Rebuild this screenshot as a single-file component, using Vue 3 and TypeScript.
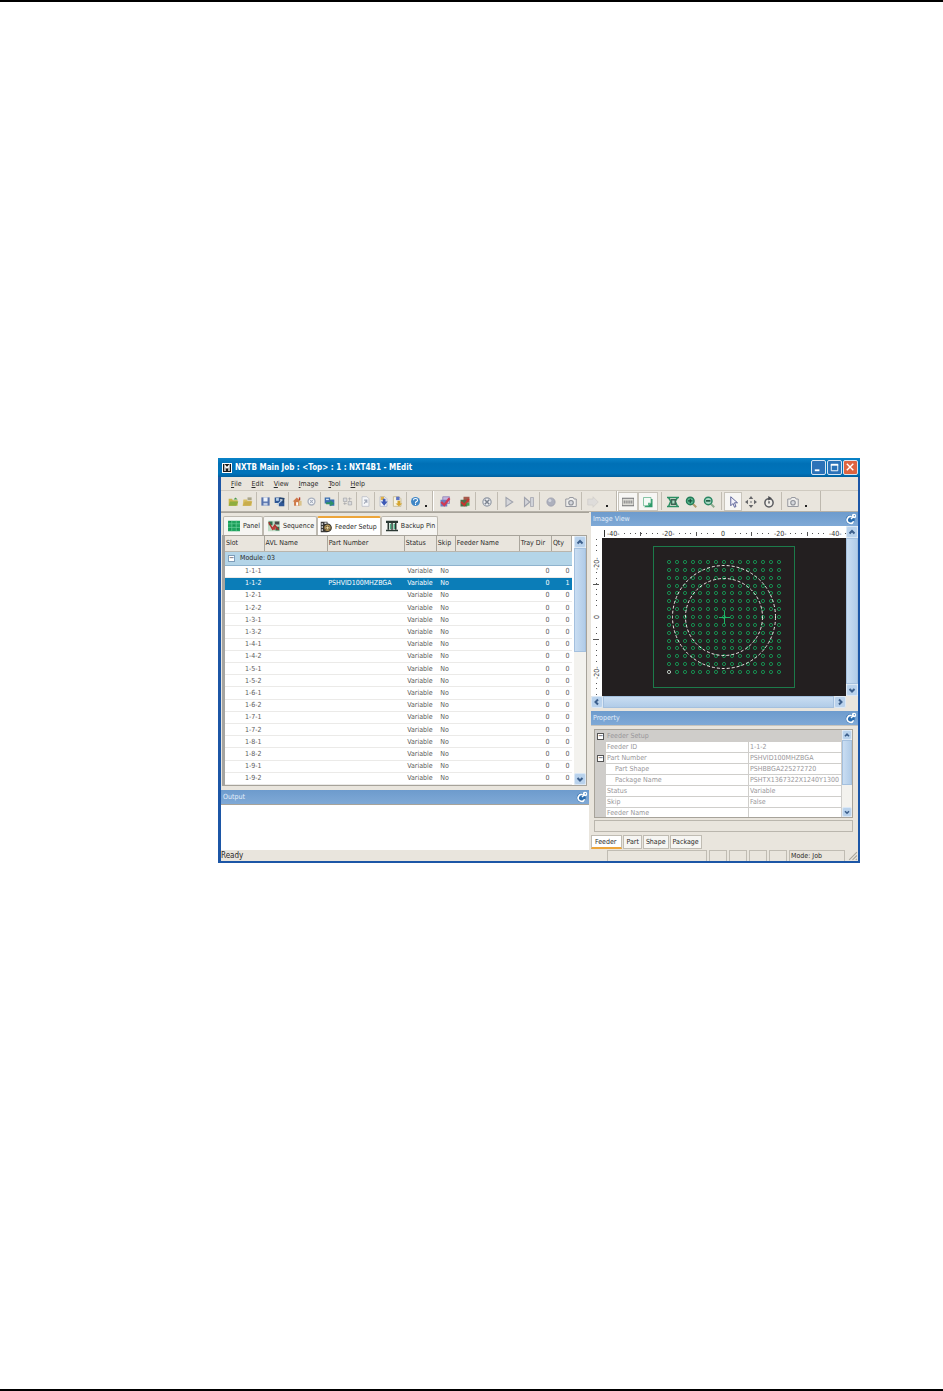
<script setup lang="ts">
interface Tool { icon: string; label: string; size?: 'mid' | 'wide'; on?: boolean; more?: boolean }
interface Bar { kind: string; groups: Tool[][] }

const icons: Record<string, string> = {
  folder: '<path d="M1 4h5l1 2h7v8H1z" fill="#c9b64a"/><path d="M3 8h12l-3 6H1z" fill="#8fae3f"/><path d="M8 5l3-3 3 3z" fill="#4b9a48"/>',
  folderNew: '<path d="M2 5h5l1 2h6v7H1z" fill="#d9bf62"/><path d="M4 8h11l-3 6H1z" fill="#c9ad4d"/><path d="M8 2h6v4H8z" fill="#a9a58a"/>',
  save: '<path d="M2 2h12v12H2z" fill="#5773ad"/><path d="M5 2h6v6H5z" fill="#eef3fa"/><path d="M5 10h6v4H5z" fill="#c3cfe4"/>',
  saveAll: '<path d="M1 2h8v8H1zM7 7h8v8H7z" fill="#2f5795"/><path d="M3 3h4v4H3z" fill="#b7d0ea"/><path d="M4 13l9-8" stroke="#b7d0ea" stroke-width="1.500"/><path d="M8 3l6 1-1 6" fill="none" stroke="#27466f" stroke-width="2.500"/>',
  home: '<path d="M1 8l6-6 6 6h-2v6H3V8z" fill="#cf7b4a"/><path d="M6 9h3v5H6z" fill="#fff"/><path d="M10 7h4v7h-4z" fill="#d9c28a"/><path d="M10 2h2v4h-2z" fill="#b63c2e"/>',
  gear: '<circle cx="8" cy="8" r="5" fill="#f4f5f8" stroke="#a9b0bd" stroke-width="2"/><path d="M6 6l4 4M10 6l-4 4" stroke="#a3acbc" stroke-width="1.500" fill="none"/>',
  transfer: '<path d="M1 2h8v9H1zM8 5h7v9H8z" fill="#3b6fb0"/><path d="M3 9h6V6l6 5-6 4v-3H3z" fill="#2e9168"/><path d="M3 4h4v2H3z" fill="#cde2f5"/>',
  link: '<path d="M2 3h5v5H2zM9 8h5v5H9z" fill="#d9dadd" stroke="#a3a5a8"/><path d="M9 4h5M2 11h5M11 2v5M4 9v4" stroke="#a3a5a8"/>',
  sheet: '<path d="M3 1h7l3 3v11H3z" fill="#f5f6f8" stroke="#b3b8c3"/><path d="M6 11l4-5M6 6h4v4" stroke="#a0a8b8" stroke-width="1.500" fill="none"/>',
  pageIn: '<path d="M3 1h7l3 3v11H3z" fill="#f3f5fa" stroke="#a5aec8"/><path d="M4 1h5v5H4z" fill="#e1b24a"/><path d="M4 8h3V4h4v4h3l-5 6z" fill="#3d59b5"/>',
  pageOut: '<path d="M2 1h8l3 3v11H2z" fill="#f7f3e2" stroke="#b9ab7c"/><path d="M6 1h5v5H6z" fill="#5c73c4"/><path d="M8 7h4v4h3l-5 4-5-4h3z" fill="#d5a52e"/>',
  help: '<circle cx="8" cy="8" r="6.500" fill="#3f86c6"/><path d="M5 6c0-3 6-3 6 0 0 2-3 2-3 4M8 11v2" stroke="#fff" stroke-width="1.500" fill="none"/>',
  jobCheck: '<path d="M5 1h9v9H5z" fill="#c4b6dc" stroke="#8a7cb5"/><path d="M2 5h9v9H2z" fill="#6c7fc0"/><path d="M3 8l4 4 7-9" stroke="#cf3b55" stroke-width="3" fill="none"/>',
  jobRun: '<path d="M6 1h8v8H6z" fill="#a55b4c"/><path d="M2 5h9v9H2z" fill="#4d6f4a"/><path d="M3 8l4 4 6-8" stroke="#c8342f" stroke-width="2.500" fill="none"/><path d="M10 9h4v4h-4z" fill="#49a254"/>',
  cancel: '<circle cx="8" cy="8" r="5.500" fill="#edeef1" stroke="#8d95a1" stroke-width="1.500"/><path d="M5 5l6 6M11 5l-6 6" stroke="#7c8490" stroke-width="2"/>',
  play: '<path d="M4 2l9 6-9 6z" fill="#d5d6da" stroke="#a0a3ad" stroke-width="1.500"/>',
  step: '<path d="M2 2l7 6-7 6z" fill="#d5d6da" stroke="#a0a3ad" stroke-width="1.500"/><path d="M10 2h4v12h-4z" fill="#d0d2d8" stroke="#a0a3ad"/>',
  record: '<circle cx="8" cy="8" r="5.500" fill="#adb0bd" stroke="#999cab"/><circle cx="6.500" cy="6" r="2" fill="#d5d7df"/>',
  camera: '<path d="M1 4h4l1-2h5l1 2h3v10H1z" fill="#eeedeb" stroke="#8e9199" stroke-width="1.200"/><circle cx="8" cy="9" r="3" fill="#d6d8dd" stroke="#8e9199" stroke-width="1.500"/>',
  forward: '<path d="M1 4h7V1l7 7-7 7v-3H1z" fill="#dedcda" stroke="#d0cdca"/>',
  ruler: '<path d="M0 3h16v10H0z" fill="#dddcd7" stroke="#6d6d70" stroke-width="1.300"/><path d="M3 6v4M5.500 6v4M8 6v4M10.500 6v4M13 6v4" stroke="#5d5d60"/>',
  layers: '<path d="M3 15h11V4h-2z" fill="#2e9a6a"/><path d="M2 2h10v7l-4 4H2z" fill="#f4faf6" stroke="#62b48b"/><path d="M12 9H8v4z" fill="#62b48b"/>',
  fit: '<path d="M0 2h16M0 14h16M2 2l3 5-3 7M14 2l-3 5 3 7" stroke="#2b8f63" stroke-width="2" fill="none"/><path d="M5 4h7v8H5z" fill="#3f6354"/><path d="M7 6h3v4H7z" fill="#a8dcc3"/>',
  zoomIn: '<path d="M10 10l5 5" stroke="#b39b6c" stroke-width="2.500"/><circle cx="7" cy="6.500" r="5" fill="#5fb892" stroke="#237d58" stroke-width="2"/><path d="M4 6.500h6M7 3.500v6" stroke="#134f38" stroke-width="1.500"/>',
  zoomOut: '<path d="M10 10l5 5" stroke="#8dab8f" stroke-width="2.500"/><circle cx="7" cy="6.500" r="5" fill="#a8d9c4" stroke="#2a8662" stroke-width="2"/><path d="M4 6.500h6" stroke="#134f38" stroke-width="2"/>',
  pointer: '<path d="M5 1v12l3-3 2 5 2-1-2-5h4z" fill="#f2f2fb" stroke="#4f5791" stroke-width="1.200"/>',
  move: '<path d="M8 0l3 4H5zM8 16l3-4H5zM0 8l4-3v6zM16 8l-4-3v6z" fill="#66676a"/><path d="M8 7v2M7 8h2" stroke="#77787b" stroke-width="1.500"/>',
  rotate: '<circle cx="8" cy="9" r="5.500" fill="#efede8" stroke="#5b5c60" stroke-width="2"/><path d="M7 0l5 3-5 3z" fill="#4b4c50"/><path d="M8 7v3" stroke="#5b5c60" stroke-width="2"/>',
  panel: '<path d="M0 1h16v14H0z" fill="#1fa45f"/><path d="M0 5h16M0 10h16M5 1v14M11 1v14" stroke="#6fd19d" stroke-width=".8"/><path d="M2 2h2M7 7h2M12 12h2M2 12h2" stroke="#0c7a41"/>',
  sequence: '<path d="M0 1h16v14H0z" fill="#bfdcc6"/><path d="M1 2h5v5H1zM10 9h5v5h-5z" fill="#2f6f4c"/><path d="M1 3l5 9 3-5 5 6" stroke="#b0302c" stroke-width="2" fill="none"/><path d="M9 2h6v4H9z" fill="#4a4a4a"/><path d="M6 9h4v4H6z" fill="#c23c38"/>',
  feeder: '<path d="M1 1h9v14H1z" fill="#3b3b3b"/><path d="M2 3h2v2H2zM2 7h2v2H2zM2 11h2v2H2zM6 2h3v2H6z" fill="#e9e9e9"/><circle cx="10" cy="9" r="5" fill="#b39558" stroke="#2c2a26" stroke-width="1.500"/><path d="M7 6l6 6M13 6l-6 6" stroke="#3c3629"/><circle cx="10" cy="9" r="1.500" fill="#eadcae"/>',
  pin: '<path d="M0 1h16v3H0zM0 13h16v2H0z" fill="#2a3833"/><path d="M3 4v9M8 4v9M13 4v9" stroke="#2a3833" stroke-width="2"/><path d="M5 5h2v7H5zM10 5h2v7h-2z" fill="#4fae86"/>',
  dock: '<circle cx="7" cy="9" r="6" fill="#2a6cae"/><path d="M9 5a4.500 4.500 0 1 0 2.500 6" fill="none" stroke="#fff" stroke-width="2.200"/><path d="M8 8l3-3" stroke="#fff" stroke-width="2"/><circle cx="12" cy="4" r="3" fill="#fff"/><circle cx="12.500" cy="3.500" r="1" fill="#5b93cb"/>',
}

const bars: Bar[] = [
  {
    kind: 'file',
    groups: [
      [{ icon: 'folder', label: 'Open job' }, { icon: 'folderNew', label: 'Open folder' }],
      [{ icon: 'save', label: 'Save' }, { icon: 'saveAll', label: 'Save all' }],
      [{ icon: 'home', label: 'Machine' }, { icon: 'gear', label: 'Options' }],
      [{ icon: 'transfer', label: 'Transfer' }],
      [{ icon: 'link', label: 'Link' }],
      [{ icon: 'sheet', label: 'Report' }],
      [{ icon: 'pageIn', label: 'Import' }, { icon: 'pageOut', label: 'Export' }],
      [{ icon: 'help', label: 'Help', more: true }],
    ],
  },
  {
    kind: 'run',
    groups: [
      [{ icon: 'jobCheck', label: 'Check job', size: 'wide' }, { icon: 'jobRun', label: 'Apply job', size: 'wide' }],
      [{ icon: 'cancel', label: 'Cancel', size: 'wide' }],
      [{ icon: 'play', label: 'Play', size: 'wide' }, { icon: 'step', label: 'Step', size: 'wide' }],
      [{ icon: 'record', label: 'Record', size: 'wide' }, { icon: 'camera', label: 'Capture', size: 'wide' }],
      [{ icon: 'forward', label: 'Next', size: 'wide', more: true }],
    ],
  },
  {
    kind: 'view',
    groups: [
      [{ icon: 'ruler', label: 'Ruler', size: 'wide', on: true }, { icon: 'layers', label: 'Layers', size: 'wide', on: true }],
      [{ icon: 'fit', label: 'Fit', size: 'mid' }, { icon: 'zoomIn', label: 'Zoom in', size: 'mid' }, { icon: 'zoomOut', label: 'Zoom out', size: 'mid' }],
      [{ icon: 'pointer', label: 'Select', size: 'mid', on: true }, { icon: 'move', label: 'Move', size: 'mid' }, { icon: 'rotate', label: 'Rotate', size: 'mid' }],
      [{ icon: 'camera', label: 'Snapshot', size: 'mid', more: true }],
    ],
  },
]

const menus = ['File', 'Edit', 'View', 'Image', 'Tool', 'Help']
const tabs = [
  { icon: 'panel', text: 'Panel' },
  { icon: 'sequence', text: 'Sequence' },
  { icon: 'feeder', text: 'Feeder Setup' },
  { icon: 'pin', text: 'Backup Pin' },
]
const columns = [
  { key: 'slot', text: 'Slot' },
  { key: 'avl', text: 'AVL Name' },
  { key: 'part', text: 'Part Number' },
  { key: 'state', text: 'Status' },
  { key: 'skip', text: 'Skip' },
  { key: 'feeder', text: 'Feeder Name' },
  { key: 'tray', text: 'Tray Dir' },
  { key: 'qty', text: 'Qty' },
]
const slots = Array.from({ length: 18 }, (_, i) => {
  const slot = `1-${Math.floor(i / 2) + 1}-${(i % 2) + 1}`
  const chosen = slot === '1-1-2'
  return { slot, chosen, part: chosen ? 'PSHVID100MHZBGA' : '', qty: chosen ? 1 : 0 }
})
const props = [
  { name: 'Feeder ID', value: '1-1-2' },
  { name: 'Part Number', value: 'PSHVID100MHZBGA', open: true },
  { name: 'Part Shape', value: 'PSHBBGA225272720', sub: true },
  { name: 'Package Name', value: 'PSHTX1367322X1240Y1300', sub: true },
  { name: 'Status', value: 'Variable' },
  { name: 'Skip', value: 'False' },
  { name: 'Feeder Name', value: '' },
]
const propTabs = ['Feeder', 'Part', 'Shape', 'Package']

const balls = Array.from({ length: 225 }, (_, i) => ({
  x: 67 + Math.round((i % 15) * 7.86),
  y: 24 + Math.round(Math.floor(i / 15) * 7.86),
  first: i === 210,
}))
const ticksX = Array.from({ length: 43 }, (_, i) => 11 + i * 5.53)
  .filter(x => [10, 66, 121, 177, 233].every(l => Math.abs(x - l) > 8))
const ticksY = Array.from({ length: 29 }, (_, i) => 1 + i * 5.53)
  .filter(y => [24, 79, 134].every(l => Math.abs(y - l) > 7))
</script>

<template>
  <main class="sheet">
    <section class="window">
      <header class="title">
        <svg class="logo" viewBox="0 0 10 10"><rect width="10" height="10" fill="#fff" /><rect x="1" y="1" width="8" height="8" fill="#1d1b1a" /><path d="M3 8V2.500L5 5l2-2.500V8" fill="none" stroke="#fff" stroke-width="1.300" /></svg>
        <h1>NXTB Main Job : &lt;Top&gt; : 1 : NXT4B1 - MEdit</h1>
        <div class="winbtns">
          <button aria-label="Minimize"><svg viewBox="0 0 14 14"><path d="M3 10h5" stroke="#fff" stroke-width="2" /></svg></button>
          <button aria-label="Maximize"><svg viewBox="0 0 14 14"><path d="M3.500 4h7v6.500h-7z" fill="none" stroke="#fff" /><path d="M3 4h8" stroke="#fff" stroke-width="2" /></svg></button>
          <button class="close" aria-label="Close"><svg viewBox="0 0 14 14"><path d="M3 3l7 7M10 3l-7 7" stroke="#fff" stroke-width="1.500" /></svg></button>
        </div>
      </header>

      <nav class="menu">
        <button v-for="m in menus" :key="m"><u>{{ m[0] }}</u>{{ m.slice(1) }}</button>
      </nav>

      <div class="tools">
        <div v-for="b in bars" :key="b.kind" class="bar" :class="b.kind">
          <div v-for="(g, gi) in b.groups" :key="gi" class="group">
            <template v-for="t in g" :key="t.label">
              <button class="tool" :class="[t.size, { on: t.on }]" :aria-label="t.label">
                <svg viewBox="0 0 16 16" v-html="icons[t.icon]"></svg>
              </button>
              <i v-if="t.more" class="more"></i>
            </template>
          </div>
        </div>
      </div>

      <div class="body">
        <div class="left">
          <div class="tabs" role="tablist">
            <button v-for="(t, i) in tabs" :key="t.text" role="tab" :class="{ active: i === 2 }">
              <svg viewBox="0 0 16 16" v-html="icons[t.icon]"></svg>{{ t.text }}
            </button>
          </div>
          <div class="grid">
            <table class="slots">
              <thead>
                <tr><th v-for="c in columns" :key="c.key" :class="c.key">{{ c.text }}</th></tr>
              </thead>
              <tbody>
                <tr class="module"><td colspan="8"><span class="box">−</span>Module: 03</td></tr>
                <tr v-for="s in slots" :key="s.slot" :class="{ chosen: s.chosen }">
                  <td class="slot">{{ s.slot }}</td>
                  <td></td>
                  <td class="part">{{ s.part }}</td>
                  <td class="state">Variable</td>
                  <td class="skip">No</td>
                  <td></td>
                  <td class="num">0</td>
                  <td class="num">{{ s.qty }}</td>
                </tr>
              </tbody>
            </table>
            <div class="vscroll">
              <button aria-label="Scroll up"><svg viewBox="0 0 10 10"><path d="M2.500 6.500L5 4l2.500 2.500" /></svg></button>
              <i class="thumb"></i>
              <button aria-label="Scroll down"><svg viewBox="0 0 10 10"><path d="M2.500 4L5 6.500 7.500 4" /></svg></button>
            </div>
          </div>
          <h2 class="head">Output<svg viewBox="0 0 16 16" v-html="icons.dock"></svg></h2>
          <div class="output"></div>
        </div>

        <div class="right">
          <h2 class="head">Image View<svg viewBox="0 0 16 16" v-html="icons.dock"></svg></h2>
          <div class="viewer">
            <div class="corner"></div>
            <svg class="rulerx" viewBox="0 0 244 12" preserveAspectRatio="none">
              <path d="M2.500 4v7" stroke="#333" />
              <rect v-for="x in ticksX" :key="x" :x="Math.round(x)" y="7" width="1" height="1" fill="#555" />
              <path d="M38.500 6v4M94.500 6v4M149.500 6v4M205.500 6v4" stroke="#555" />
              <text x="5" y="10">-40-</text><text x="60" y="10">-20-</text><text x="119" y="10">0</text><text x="172" y="10">-20-</text><text x="227" y="10">-40-</text>
            </svg>
            <div class="vscroll tall">
              <button aria-label="Scroll up"><svg viewBox="0 0 10 10"><path d="M2.500 6.500L5 4l2.500 2.500" /></svg></button>
              <i class="thumb"></i>
              <button aria-label="Scroll down"><svg viewBox="0 0 10 10"><path d="M2.500 4L5 6.500 7.500 4" /></svg></button>
            </div>
            <svg class="rulery" viewBox="0 0 11 158" preserveAspectRatio="none">
              <rect v-for="y in ticksY" :key="y" x="5" :y="Math.round(y)" width="1" height="1" fill="#555" />
              <path d="M2 46.500h6M2 101.500h6" stroke="#555" />
              <text transform="translate(8 32) rotate(-90)">-20-</text>
              <text transform="translate(8 81) rotate(-90)">0</text>
              <text transform="translate(8 141) rotate(-90)">-20-</text>
            </svg>
            <svg class="canvas" viewBox="0 0 244 158">
              <rect x="51.500" y="8.500" width="141" height="141" fill="none" stroke="#1c7a4a" />
              <circle v-for="(b, i) in balls" :key="i" :cx="b.x" :cy="b.y" r="1.600" fill="none" :stroke="b.first ? '#b9c4bd' : '#178c50'" />
              <circle cx="122" cy="79" r="51.500" fill="none" stroke="#ece6e4" stroke-dasharray="3 2" />
              <circle cx="122" cy="79" r="38.500" fill="none" stroke="#ece6e4" stroke-dasharray="3 2" />
              <path d="M117 79.500h11M122.500 73v13" stroke="#1fb566" />
            </svg>
            <div class="hscroll">
              <button aria-label="Scroll left"><svg viewBox="0 0 10 10"><path d="M6 2.500L3.500 5 6 7.500" /></svg></button>
              <i class="thumb"></i>
              <button aria-label="Scroll right"><svg viewBox="0 0 10 10"><path d="M4 2.500L6.500 5 4 7.500" /></svg></button>
            </div>
            <div class="foot"></div>
          </div>
          <h2 class="head">Property<svg viewBox="0 0 16 16" v-html="icons.dock"></svg></h2>
          <div class="property">
            <div class="sheetgrid">
              <table>
                <colgroup><col class="cgut"><col class="cname"><col></colgroup>
                <tbody>
                  <tr class="cat"><td class="gut"><span>−</span></td><th colspan="2">Feeder Setup</th></tr>
                  <tr v-for="p in props" :key="p.name">
                    <td class="gut"><span v-if="p.open">−</span></td>
                    <th :class="{ sub: p.sub }">{{ p.name }}</th>
                    <td>{{ p.value }}</td>
                  </tr>
                </tbody>
              </table>
              <div class="vscroll">
                <button aria-label="Scroll up"><svg viewBox="0 0 10 10"><path d="M2.500 6.500L5 4l2.500 2.500" /></svg></button>
                <i class="thumb"></i>
                <button aria-label="Scroll down"><svg viewBox="0 0 10 10"><path d="M2.500 4L5 6.500 7.500 4" /></svg></button>
              </div>
            </div>
            <div class="hint"></div>
          </div>
          <div class="ptabs" role="tablist">
            <button v-for="(t, i) in propTabs" :key="t" role="tab" :class="{ active: i === 0 }">{{ t }}</button>
          </div>
        </div>
      </div>

      <footer class="statusbar">
        <span class="ready">Ready</span>
        <span class="cell long"></span><span class="cell"></span><span class="cell"></span><span class="cell"></span><span class="cell"></span>
        <span class="cell mode">Mode: Job</span>
        <svg viewBox="0 0 10 10"><path d="M9 2L2 9M9 5L5 9M9 8L8 9" stroke="#a8a59a" /></svg>
      </footer>
    </section>
  </main>
</template>

<style>
body { margin: 0; background: #fff; }
</style>

<style scoped>
* { box-sizing: border-box; }
.sheet {
  min-height: 100vh;
  border-top: 2px solid #000;
  border-bottom: 2px solid #000;
  padding: 456px 83px 0 218px;
  font: 7px/10px "DejaVu Sans Condensed", "Noto Sans", sans-serif;
  color: #2b2a29;
}
button { font: inherit; color: inherit; margin: 0; padding: 0; border: 0; background: none; white-space: nowrap; }
svg { display: block; }
.window { background: #e9e5dd; border: solid #1c56a6; border-width: 0 2px 2px 3px; }

.title { display: flex; align-items: center; height: 19px; margin: 0 -2px 0 -3px; padding: 0 2px 0 4px; background: linear-gradient(#0a83c8, #0070b6 30%, #0074bb 80%, #00609f); }
.logo { width: 10px; height: 10px; }
h1 { flex: 1; margin: 0 0 0 3px; font: bold 8px/18px "DejaVu Sans Condensed", "Noto Sans", sans-serif; color: #fff; white-space: nowrap; }
.winbtns { display: flex; gap: 1px; }
.winbtns button { width: 15px; height: 15px; border: 1px solid #d6e6f4; border-radius: 2px; background: #2b72b8; }
.winbtns .close { background: #dd6440; }

.menu { display: flex; gap: 10px; height: 13px; padding-left: 10px; }
.menu button { line-height: 12px; }

.tools { display: flex; height: 22px; border-top: 1px solid #cfcac0; border-bottom: 1px solid #b5b1a8; }
.bar { display: flex; padding: 1px 0; border-right: 1px solid #bdb8ae; }
.bar.file { padding-left: 5px; padding-right: 1px; }
.bar.run { border-left: 1px solid #fff; padding-left: 1px; padding-right: 4px; }
.bar.view { border-left: 1px solid #fff; padding-right: 9px; }
.group { display: flex; }
.group + .group { margin-left: 1px; padding-left: 2px; border-left: 1px solid #c1bcb2; }
.file .group + .group { margin-left: 2px; padding-left: 1px; }
.run .group + .group { margin-left: 0; padding-left: 1px; }
.view .group + .group { margin-left: 3px; }
.tool { display: flex; align-items: center; justify-content: center; width: 14px; height: 19px; }
.tool svg { width: 11px; height: 11px; }
.tool.mid { width: 18px; }
.tool.wide { width: 20px; }
.tool.mid svg, .tool.wide svg { width: 12px; height: 12px; }
.tool.on { background: #f7f6f4; border: 1px solid #c8c4bb; }
.more { align-self: flex-end; width: 2px; height: 2px; margin: 0 4px 3px 3px; background: #222; }

.body { display: grid; grid-template-columns: 370fr 267fr; }
.left, .right { min-width: 0; }
.left { padding-right: 2px; }
.right { background: #e9e5dd; }

.tabs { display: flex; height: 23px; padding: 3px 0 0 2px; border-top: 1px solid #a7a39a; }
.tabs button { display: flex; align-items: center; gap: 3px; padding: 0 2px 0 4px; border: 1px solid #bdb9b0; border-bottom: 0; border-radius: 2px 2px 0 0; background: #f6f5f2; }
.tabs .active { background: #fff; border-top: 2px solid #eda53a; padding: 0 3px 0 2px; }
.tabs svg { width: 12px; height: 12px; }

.grid { display: flex; margin: 0 2px 0 1px; border: 1px solid #a7a39a; border-left: 3px solid #a5a4a0; background: #fff; }
.slots { flex: 1; height: 249px; border-collapse: collapse; table-layout: fixed; }
.slots th { height: 15px; padding: 0 0 0 1px; font-weight: normal; text-align: left; background: #e9e5dd; border-right: 1px solid #aaa69d; border-bottom: 1px solid #b9b5ac; white-space: nowrap; line-height: 12px; }
.slots td { padding: 0 0 0 3px; color: #5c5b5a; border-bottom: 1px solid #ebeae8; line-height: 10px; white-space: nowrap; }
.slots th.slot { width: 39px; }
.slots th.avl { width: 63px; }
.slots th.part { width: 77px; }
.slots th.state { width: 32px; }
.slots th.skip { width: 19px; }
.slots th.feeder { width: 64px; }
.slots th.tray { width: 32px; }
.slots th.qty { width: 20px; }
.slots td.slot { padding-left: 20px; }
.slots td.part { padding-left: 1px; }
.slots td.skip { padding-left: 4px; }
.slots td.num { padding: 0 2px 0 0; text-align: right; }
.slots .module td { height: 14px; background: #b4d5e8; color: #2b2a29; border-bottom: 1px solid #8fb3cd; }
.box { display: inline-block; width: 7px; height: 7px; margin-right: 5px; border: 1px solid #7f9db9; background: #fff; line-height: 5px; text-align: center; }
.slots .chosen td { background: #0b7db8; color: #fff; border-color: #0b7db8; }

.vscroll { display: flex; flex-direction: column; flex: none; width: 12px; margin-left: 2px; background: #f3f2ee; }
.vscroll button, .hscroll button { flex: none; width: 12px; height: 12px; border: 1px solid #dbe8f6; border-radius: 2px; background: #b9d2ec; }
.vscroll path, .hscroll path { fill: none; stroke: #3c5f8c; stroke-width: 2; }
.vscroll .thumb { height: 104px; background: linear-gradient(90deg, #c9ddf2, #b1cce8); border: 1px solid #a4c0de; }
.vscroll button:last-child { margin-top: auto; }

.head { display: flex; align-items: center; justify-content: space-between; height: 14px; margin: 0; padding: 0 1px 0 2px; font: inherit; color: #e3eefa; background: linear-gradient(#6d9bcd, #7fa9d6); }
.head svg { width: 12px; height: 12px; }
.left .head { margin-top: 4px; }
.output { height: 46px; border-top: 1px solid #a7a39a; background: #fff; }

.viewer { display: grid; grid-template-columns: 11px 1fr 12px; grid-template-rows: 12px 158px 12px; margin-bottom: 3px; background: #fff; }
.rulerx, .rulery { width: 100%; height: 100%; }
.rulerx text, .rulery text { font-size: 7px; fill: #333; }
.canvas { width: 100%; height: 100%; background: #231f20; }
.vscroll.tall { grid-row: 1 / 3; grid-column: 3; margin: 0; }
.tall .thumb { flex: 1; }
.hscroll { grid-column: 1 / 3; display: flex; background: #e9e5dd; }
.hscroll .thumb { flex: 1; background: linear-gradient(#c9ddf2, #b1cce8); border: 1px solid #a4c0de; }
.foot { background: #e9e5dd; }

.property { padding: 3px 5px 0 3px; border-top: 1px solid #c9c5bc; }
.sheetgrid { display: flex; height: 89px; border: 1px solid #a7a39a; background: #fff; overflow: hidden; }
.sheetgrid table { flex: 1; border-collapse: collapse; table-layout: fixed; width: 0; }
.cgut { width: 10px; }
.cname { width: 143px; }
.sheetgrid tr { height: 11px; }
.sheetgrid td, .sheetgrid th { padding: 0 0 0 1px; font-weight: normal; text-align: left; color: #99979a; border: 1px solid #cfcecb; line-height: 9px; white-space: nowrap; }
.sheetgrid td.gut { padding: 0; background: #cfcdca; border-color: #cfcdca; }
.sheetgrid .cat th { background: #cfcdca; border-color: #cfcdca; }
.sheetgrid .sub { padding-left: 9px; }
.gut span { display: block; width: 7px; height: 7px; margin-left: 1px; border: 1px solid #555; background: #fff; color: #222; line-height: 5px; text-align: center; }
.sheetgrid .vscroll { width: 10px; margin: 0; }
.sheetgrid .vscroll button { width: 10px; height: 10px; }
.sheetgrid .thumb { height: 45px; }
.hint { height: 12px; margin-top: 2px; border: 1px solid #bab6ad; }

.ptabs { display: flex; gap: 1px; height: 18px; padding: 3px 0 1px; }
.ptabs button { padding: 0 2px; border: 1px solid #c0bcb3; background: #f6f5f2; }
.ptabs .active { padding: 0 5px 0 3px; background: #fff; border-bottom: 2px solid #eda53a; }

.statusbar { display: flex; align-items: stretch; gap: 2px; height: 11px; }
.ready { flex: 1; font-size: 8px; line-height: 11px; }
.cell { width: 18px; border: solid #c0bcb3; border-width: 1px 1px 0; }
.cell.long { width: 100px; }
.cell.mode { width: 56px; padding-left: 1px; line-height: 10px; }
.statusbar > svg { width: 11px; height: 11px; }
</style>
